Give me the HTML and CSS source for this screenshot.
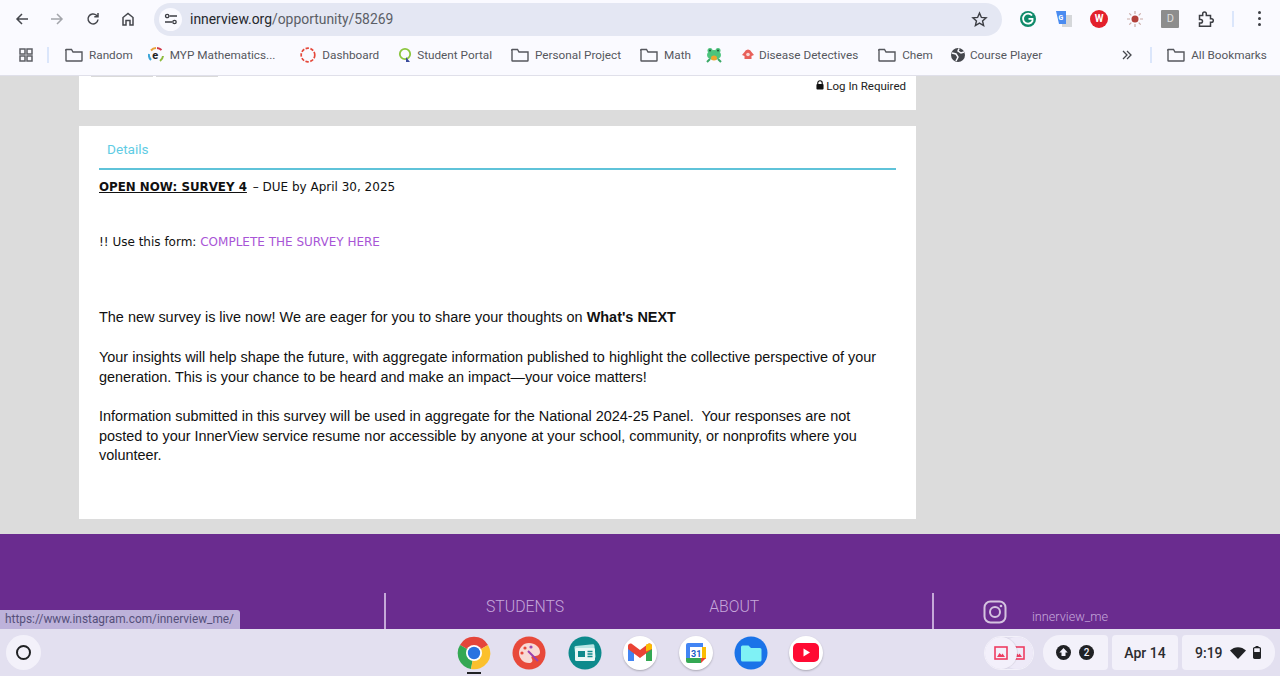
FILE: index.html
```html
<!DOCTYPE html>
<html lang="en">
<head>
    <meta charset="UTF-8">
    <title>innerview.org/opportunity/58269</title>
    <link rel="stylesheet" href="styles.css">
</head>
<body>
    <header class="browser">
        <div class="toolbar">
            <div class="nav-btns">
                <svg class="nav-icon" viewBox="0 0 16 16"><path d="M14 8H3M8 3L3 8l5 5" fill="none" stroke="#45474d" stroke-width="1.5"/></svg>
                <svg class="nav-icon" viewBox="0 0 16 16"><path d="M2 8h11M8 3l5 5-5 5" fill="none" stroke="#a3a5ab" stroke-width="1.5"/></svg>
                <svg class="nav-icon" viewBox="0 0 16 16"><path d="M13 8.500A5 5 0 1 1 11.500 4.300L13 5.600M13 2v3.800H9.300" fill="none" stroke="#45474d" stroke-width="1.5"/></svg>
                <svg class="nav-icon" viewBox="0 0 16 16"><path d="M3 14V6.500L8 2.500l5 4V14h-3V9.500H6V14z" fill="none" stroke="#45474d" stroke-width="1.5"/></svg>
            </div>
            <div class="omnibox">
                <span class="site-chip">
                    <svg width="14" height="14" viewBox="0 0 14 14"><path d="M5.500 4H13M1 10h7" stroke="#3c3e44" stroke-width="1.300"/><circle cx="3.200" cy="4" r="1.700" fill="none" stroke="#3c3e44" stroke-width="1.300"/><circle cx="10.500" cy="10" r="1.700" fill="none" stroke="#3c3e44" stroke-width="1.300"/></svg>
                </span>
                <span class="url">innerview.org<span class="url-path">/opportunity/58269</span></span>
                <svg class="star" width="17" height="17" viewBox="0 0 24 24"><path d="M12 3l2.700 6.100 6.600.6-5 4.400 1.500 6.500L12 17.200l-5.800 3.400 1.500-6.500-5-4.400 6.600-.6z" fill="none" stroke="#3c3e44" stroke-width="2"/></svg>
            </div>
            <div class="extensions">
                <svg class="ext-svg" width="18" height="18" viewBox="0 0 18 18"><circle cx="9" cy="9" r="8" fill="#0f8a6a"/><path d="M13 5.500A5 5 0 1 0 13.500 11V8.800H9.500" fill="none" stroke="#fff" stroke-width="1.800"/></svg>
                <svg class="ext-svg" width="18" height="18" viewBox="0 0 18 18"><rect x="7" y="5" width="10" height="12" fill="#d5d7da"/><path d="M1 1h10v13H4z" fill="#4a8bf0"/><text x="3.500" y="10" class="ext-letter">G</text></svg>
                <span class="ext ext-red">W</span>
                <svg class="ext-svg" width="18" height="18" viewBox="0 0 18 18"><circle cx="9" cy="9" r="3.500" fill="#b3403a"/><path d="M9 1v3M9 14v3M1 9h3M14 9h3M3.300 3.300l2 2M12.700 12.700l2 2M14.700 3.300l-2 2M5.300 12.700l-2 2" stroke="#c9a9a5" stroke-width="1.200"/></svg>
                <span class="ext ext-gray">D</span>
                <svg class="ext-svg" width="18" height="18" viewBox="0 0 18 18"><path d="M2.500 5.500h3.200V3.800a1.800 1.800 0 0 1 3.600 0v1.700h4.200v3.200h1a1.800 1.800 0 0 1 0 3.600h-1v4H2.500v-3.300h1.200a1.800 1.800 0 0 0 0-3.600H2.500z" fill="none" stroke="#3c3e44" stroke-width="1.500"/></svg>
                <span class="tb-divider"></span>
                <span class="kebab"><i></i><i></i><i></i></span>
            </div>
        </div>
        <div class="bookmarks">
            <svg class="apps" width="14" height="14" viewBox="0 0 14 14"><path d="M1 1h5v5H1zM8 1h5v5H8zM1 8h5v5H1zM8 8h5v5H8z" fill="none" stroke="#5d5f65" stroke-width="1.500"/></svg>
            <span class="bm-divider"></span>
            <a class="bm bm-random"><svg class="folder" viewBox="0 0 18 14"><path d="M1 2.500V12.500a.5.5 0 0 0 .5.5h15a.5.5 0 0 0 .5-.5V4H8L6.500 1.500H1.500A.5.5 0 0 0 1 2.500z" fill="none" stroke="#55575d" stroke-width="1.400"/></svg>Random</a>
            <a class="bm bm-myp"><svg class="fav" viewBox="0 0 16 16"><path d="M3 3.500A7 7 0 0 1 8 1" fill="none" stroke="#e8a33a" stroke-width="2"/><path d="M9 1a7 7 0 0 1 4.500 2" fill="none" stroke="#d13a4a" stroke-width="2"/><path d="M15 9a7 7 0 0 1-3 5" fill="none" stroke="#8dbb3c" stroke-width="2"/><path d="M3 13a7 7 0 0 1-2-6" fill="none" stroke="#3aa5d8" stroke-width="2"/><text x="4.300" y="11.500" class="fav-e">e</text></svg>MYP Mathematics...</a>
            <a class="bm bm-dash"><svg class="fav" viewBox="0 0 16 16"><circle cx="8" cy="8" r="6.800" fill="none" stroke="#e5483a" stroke-width="1.700" stroke-dasharray="3.400 1.500"/></svg>Dashboard</a>
            <a class="bm bm-portal"><svg class="fav" viewBox="0 0 16 16"><circle cx="8" cy="7" r="5.200" fill="none" stroke="#8cc63f" stroke-width="1.800"/><path d="M9 10l4 5H9z" fill="#3a4a9c"/></svg>Student Portal</a>
            <a class="bm bm-project"><svg class="folder" viewBox="0 0 18 14"><path d="M1 2.500V12.500a.5.5 0 0 0 .5.5h15a.5.5 0 0 0 .5-.5V4H8L6.500 1.500H1.500A.5.5 0 0 0 1 2.500z" fill="none" stroke="#55575d" stroke-width="1.400"/></svg>Personal Project</a>
            <a class="bm bm-math"><svg class="folder" viewBox="0 0 18 14"><path d="M1 2.500V12.500a.5.5 0 0 0 .5.5h15a.5.5 0 0 0 .5-.5V4H8L6.500 1.500H1.500A.5.5 0 0 0 1 2.500z" fill="none" stroke="#55575d" stroke-width="1.400"/></svg>Math</a>
            <svg class="fav bm-frog" viewBox="0 0 16 16"><ellipse cx="8" cy="8" rx="7" ry="5" fill="#4cc47c"/><circle cx="4" cy="3.500" r="2.500" fill="#4cc47c"/><circle cx="12" cy="3.500" r="2.500" fill="#4cc47c"/><circle cx="4" cy="3.500" r="1" fill="#24503a"/><circle cx="12" cy="3.500" r="1" fill="#24503a"/><ellipse cx="8" cy="11" rx="3" ry="2.500" fill="#eda52c"/><path d="M1 15l3-3M15 15l-3-3" stroke="#3aa866" stroke-width="2"/></svg>
            <a class="bm bm-disease"><svg class="fav" viewBox="0 0 16 16"><path d="M8 2.500a4 4 0 0 1 3.500 2.500L14 8l-2.500 1v3h-7V9L2 8l2.500-3A4 4 0 0 1 8 2.500z" fill="#e8605a"/><circle cx="8" cy="7.500" r="1.800" fill="#f8d8d6"/></svg>Disease Detectives</a>
            <a class="bm bm-chem"><svg class="folder" viewBox="0 0 18 14"><path d="M1 2.500V12.500a.5.5 0 0 0 .5.5h15a.5.5 0 0 0 .5-.5V4H8L6.500 1.500H1.500A.5.5 0 0 0 1 2.500z" fill="none" stroke="#55575d" stroke-width="1.400"/></svg>Chem</a>
            <a class="bm bm-course"><svg class="fav" viewBox="0 0 16 16"><circle cx="8" cy="8" r="7" fill="#45474d"/><path d="M2 6l4 1 2 3-2 4M9 1.500L8 4l3 2 3-1" fill="none" stroke="#fafaff" stroke-width="1.500"/></svg>Course Player</a>
            <svg class="bm-more" width="10" height="10" viewBox="0 0 10 10"><path d="M1 1l4 4-4 4M5 1l4 4-4 4" fill="none" stroke="#45474d" stroke-width="1.300"/></svg>
            <span class="bm-divider"></span>
            <a class="bm bm-all"><svg class="folder" viewBox="0 0 18 14"><path d="M1 2.500V12.500a.5.5 0 0 0 .5.5h15a.5.5 0 0 0 .5-.5V4H8L6.500 1.500H1.500A.5.5 0 0 0 1 2.500z" fill="none" stroke="#55575d" stroke-width="1.400"/></svg>All Bookmarks</a>
        </div>
    </header>

    <main class="page">
        <section class="card card-top">
            <div class="stub-btns"><span></span><span></span></div>
            <div class="login-note">
                <svg width="8" height="10" viewBox="0 0 9 11"><path d="M2 5V3.200a2.500 2.500 0 0 1 5 0V5" fill="none" stroke="#111" stroke-width="1.300"/><rect x="0.500" y="4.500" width="8" height="6" rx="1" fill="#111"/></svg>
                Log In Required
            </div>
        </section>

        <section class="card card-details">
            <div class="tabs"><span class="tab">Details</span></div>
            <p class="verdana first"><strong class="open-now">OPEN NOW: SURVEY 4</strong> &ndash; DUE by April 30, 2025</p>
            <p class="verdana form-line">!! Use this form: <a class="survey-link">COMPLETE THE SURVEY HERE</a></p>
            <p class="body-text intro">The new survey is live now! We are eager for you to share your thoughts on <b>What's NEXT</b></p>
            <p class="body-text">Your insights will help shape the future, with aggregate information published to highlight the collective perspective of your generation. This is your chance to be heard and make an impact&mdash;your voice matters!</p>
            <p class="body-text">Information submitted in this survey will be used in aggregate for the National 2024-25 Panel.&nbsp; Your responses are not posted to your InnerView service resume nor accessible by anyone at your school, community, or nonprofits where you volunteer.</p>
        </section>

        <footer class="site-footer">
            <div class="footer-links">
                <span class="footer-link link-students">STUDENTS</span>
                <span class="footer-link link-about">ABOUT</span>
            </div>
            <div class="footer-social">
                <svg width="24" height="24" viewBox="0 0 24 24"><rect x="1.500" y="1.500" width="21" height="21" rx="6" fill="none" stroke="#d5c3e0" stroke-width="2"/><circle cx="12" cy="12" r="5" fill="none" stroke="#d5c3e0" stroke-width="2"/><circle cx="18" cy="6" r="1.300" fill="#d5c3e0"/></svg>
                <span class="handle">innerview_me</span>
            </div>
        </footer>
    </main>

    <div class="status-bubble">https://www.instagram.com/innerview_me/</div>

    <nav class="shelf">
        <span class="launcher"><i></i></span>
        <div class="apps-row">
            <span class="app app-active">
                <svg width="34" height="34" viewBox="0 0 34 34"><path d="M17 17L3 9A16 16 0 0 1 31 9z" fill="#e5453a"/><path d="M17 17L3 9A16 16 0 0 0 14 33z" fill="#34a853"/><path d="M17 17L31 9A16 16 0 0 1 14 33z" fill="#fbc02d"/><circle cx="17" cy="17" r="8" fill="#fff"/><circle cx="17" cy="17" r="6.200" fill="#2a73e0"/></svg>
            </span>
            <span class="app">
                <svg width="34" height="34" viewBox="0 0 34 34"><circle cx="17" cy="17" r="16.500" fill="#e8493a"/><path d="M17 7c6 0 11 4 11 9 0 3-3 4-5 4h-2c-2 0-2 2-1 3 1 2 0 4-3 4-6 0-10-5-10-10S11 7 17 7z" fill="#f8d9d5"/><circle cx="13" cy="12" r="1.600" fill="#e8493a"/><circle cx="19" cy="11" r="1.600" fill="#a04ab0"/><circle cx="10" cy="17" r="1.600" fill="#e8493a"/><path d="M16 15l10 10" stroke="#9b3fae" stroke-width="2"/></svg>
            </span>
            <span class="app">
                <svg width="34" height="34" viewBox="0 0 34 34"><circle cx="17" cy="17" r="16.500" fill="#0d8a8c"/><rect x="7" y="9" width="20" height="14" rx="1.500" fill="#b9e6e4" transform="rotate(-6 17 16)"/><rect x="7" y="12" width="20" height="13" rx="1.500" fill="#e9f7f6"/><rect x="10" y="15" width="7" height="6" fill="#0d8a8c"/><path d="M19.500 15.500h5M19.500 18h5M19.500 20.500h5" stroke="#0d8a8c" stroke-width="1.300"/></svg>
            </span>
            <span class="app app-white">
                <svg width="26" height="20" viewBox="0 0 26 20"><path d="M1 18V4l6 4.500V18z" fill="#4285f4"/><path d="M25 18V4l-6 4.500V18z" fill="#34a853"/><path d="M1 6V3c0-2 2-3 4-2l8 6 8-6c2-1 4 0 4 2v3l-12 9z" fill="#ea4335"/><path d="M19 8.500V1.500L21 1c2-1 4 0 4 2v3z" fill="#fbbc04"/></svg>
            </span>
            <span class="app app-white">
                <svg width="22" height="22" viewBox="0 0 22 22"><rect x="1" y="1" width="20" height="20" rx="2" fill="#fff"/><path d="M4 1h14v4H4z" fill="#4285f4"/><path d="M1 3a2 2 0 0 1 2-2h2v15H1z" fill="#4285f4"/><path d="M17 5h4v12h-4z" fill="#fbbc04"/><path d="M1 16h15v5H3a2 2 0 0 1-2-2z" fill="#34a853"/><path d="M16 16h5l-5 5z" fill="#ea4335"/><text x="6" y="14.500" class="cal-num">31</text></svg>
            </span>
            <span class="app">
                <svg width="34" height="34" viewBox="0 0 34 34"><circle cx="17" cy="17" r="16.500" fill="#1a73e8"/><path d="M7 11a1.500 1.500 0 0 1 1.500-1.500h6L17 12h9a1.500 1.500 0 0 1 1.500 1.500V24a1.500 1.500 0 0 1-1.500 1.500H8.500A1.500 1.500 0 0 1 7 24z" fill="#7ff1f5"/></svg>
            </span>
            <span class="app app-white">
                <svg width="26" height="19" viewBox="0 0 26 19"><rect width="26" height="19" rx="5" fill="#ff0a33"/><path d="M10.500 5.500l6.500 4-6.500 4z" fill="#fff"/></svg>
            </span>
        </div>
        <div class="tray">
            <div class="tray-media">
                <span class="media-back"><svg width="14" height="14" viewBox="0 0 14 14"><rect x="1" y="1" width="12" height="12" fill="none" stroke="#ee3d62" stroke-width="1.600"/><path d="M3 11l2.500-4 2 2 1-1.500L11 11z" fill="#ee3d62"/></svg></span>
                <span class="media-front"><svg width="14" height="14" viewBox="0 0 14 14"><rect x="1" y="1" width="12" height="12" fill="none" stroke="#ee3d62" stroke-width="1.600"/><path d="M3 11l2.500-4 2 2 1-1.500L11 11z" fill="#ee3d62"/></svg></span>
            </div>
            <div class="pod pod-notify">
                <svg width="15" height="15" viewBox="0 0 15 15"><circle cx="7.500" cy="7.500" r="7.500" fill="#202124"/><path d="M7.500 3l4.200 4.500H9.500V11h-4V7.500H3.300z" fill="#f3f1fa"/></svg>
                <span class="badge-count">2</span>
            </div>
            <div class="pod pod-date">Apr 14</div>
            <div class="pod pod-time">
                <span>9:19</span>
                <svg width="16" height="12" viewBox="0 0 16 12"><path d="M0 3.500C4.500-1 11.500-1 16 3.500L8 12z" fill="#202124"/></svg>
                <svg width="8" height="13" viewBox="0 0 8 13"><rect x="2.500" y="0" width="3" height="2" fill="#202124"/><rect x="0.600" y="1.600" width="6.800" height="10.800" rx="1" fill="none" stroke="#202124" stroke-width="1.200"/><rect x="1" y="6" width="6" height="6" fill="#202124"/></svg>
            </div>
        </div>
    </nav>
</body>
</html>
```

FILE: styles.css
```css
* {
    box-sizing: border-box;
}
html, body {
    height: 100%;
}
body {
    margin: 0;
    height: 676px;
    overflow: hidden;
    display: flex;
    flex-direction: column;
    position: relative;
    font-family: Roboto, sans-serif;
    background-color: #dcdcdc;
}

/* browser chrome */
.browser {
    height: 76px;
    flex-shrink: 0;
    background-color: #fafaff;
    border-bottom: 1px solid #e0e0ea;
}
.toolbar {
    height: 37px;
    display: flex;
    align-items: center;
    padding: 0 0 0 14px;
}
.nav-btns {
    width: 140px;
    display: flex;
    gap: 19.3px;
}
.nav-icon {
    width: 16px;
    height: 16px;
}
.omnibox {
    width: 848px;
    height: 33px;
    margin-top: 1px;
    border-radius: 17px;
    background-color: #e4e7f3;
    display: flex;
    align-items: center;
    padding: 0 14px 0 5px;
}
.site-chip {
    width: 23px;
    height: 23px;
    border-radius: 50%;
    background-color: #fafaff;
    display: flex;
    align-items: center;
    justify-content: center;
}
.url {
    margin-left: 8px;
    font-size: 13.9px;
    color: #26282d;
    flex: 1;
}
.url-path {
    color: #5b5e66;
}
.extensions {
    display: flex;
    align-items: center;
    margin-left: 17px;
}
.ext {
    width: 18px;
    height: 18px;
    border-radius: 50%;
    display: flex;
    align-items: center;
    justify-content: center;
    font-size: 11px;
    font-weight: 700;
    color: #fff;
}
.ext-svg {
    flex-shrink: 0;
}
.extensions > * {
    margin-right: 17.6px;
}
.ext-red {
    background-color: #e3202c;
    font-size: 10px;
}
.ext-gray {
    border-radius: 1px;
    background-color: #8d8d8d;
    color: #dedede;
    font-weight: 400;
}
.extensions .tb-divider {
    width: 2px;
    height: 16px;
    background-color: #dbe6fb;
    margin-right: 24px;
    margin-left: -1px;
}
.kebab {
    display: flex;
    flex-direction: column;
    gap: 3px;
    width: 3px;
}
.kebab i {
    width: 3px;
    height: 3px;
    border-radius: 50%;
    background-color: #3c3e44;
}
.ext-letter {
    font: 700 7px Roboto, sans-serif;
    fill: #fff;
}

.bookmarks {
    height: 38px;
    display: flex;
    align-items: center;
    font-size: 11.75px;
    color: #55575d;
    padding-left: 19px;
    padding-bottom: 3px;
}
.bm {
    display: flex;
    align-items: center;
    white-space: nowrap;
}
.bm-divider {
    width: 2px;
    height: 16px;
    background-color: #dbe6fb;
    margin-left: 14px;
}
.folder {
    width: 18px;
    height: 14px;
    margin-right: 6px;
}
.fav {
    width: 16px;
    height: 16px;
    margin-right: 6px;
    flex-shrink: 0;
}
.fav-e {
    font: 700 11px Roboto, sans-serif;
    fill: #222;
}
.bm-random {
    margin-left: 16px;
}
.bm-myp {
    margin-left: 15px;
}
.bm-dash {
    margin-left: 25px;
}
.bm-portal {
    margin-left: 18px;
}
.bm-portal .fav, .bm-course .fav {
    margin-right: 4px;
}
.bm-project {
    margin-left: 19px;
}
.bm-math {
    margin-left: 19px;
}
.bm-frog {
    margin-left: 15px;
    margin-right: 0;
}
.bm-disease {
    margin-left: 18px;
}
.bm-disease .fav {
    margin-right: 3px;
}
.bm-chem {
    margin-left: 20px;
}
.bm-course {
    margin-left: 17px;
}
.bm-more {
    margin-left: 80px;
    margin-right: 4px;
}
.bm-all {
    margin-left: 15px;
}

/* page */
.page {
    flex: 1;
    overflow: hidden;
    background-color: #dcdcdc;
    display: flex;
    flex-direction: column;
}
.card {
    width: 837px;
    margin-left: 79px;
    background-color: #fff;
    flex-shrink: 0;
}
.card-top {
    height: 34px;
    display: flex;
    justify-content: space-between;
    padding: 0 10px 0 12px;
}
.stub-btns {
    display: flex;
    gap: 3px;
}
.stub-btns span {
    width: 62px;
    height: 1px;
    background-color: #dadada;
}
.login-note {
    font-size: 11.5px;
    color: #222;
    padding-top: 3px;
}
.card-details {
    height: 393px;
    margin-top: 16px;
    padding: 0 20px;
    color: #111;
}
.tabs {
    height: 44px;
    border-bottom: 2px solid #5fc3d9;
    padding: 13px 0 0 8px;
}
.tab {
    font-size: 13.6px;
    color: #5fcce4;
}
.verdana {
    font-family: "DejaVu Sans", sans-serif;
    font-size: 12px;
    margin: 0;
    line-height: 14px;
}
.first {
    margin-top: 10px;
}
.open-now {
    text-decoration: underline;
    font-size: 11.85px;
    margin-right: 2px;
}
.form-line {
    margin-top: 41px;
}
.survey-link {
    color: #a855d6;
}
.body-text {
    font-family: "Liberation Sans", Arial, sans-serif;
    font-size: 14.45px;
    line-height: 19.6px;
    margin: 20px 0 0;
    padding-right: 12px;
}
.intro {
    margin-top: 59.3px;
    margin-bottom: 20.2px;
}

/* footer */
.site-footer {
    margin-top: 15px;
    flex: 1;
    background-color: #6a2c8f;
    padding-top: 59px;
    display: flex;
    color: #c6a8db;
}
.footer-links {
    margin-left: 384px;
    width: 550px;
    height: 60px;
    border-left: 2px solid #c5a9d8;
    border-right: 2px solid #c5a9d8;
    display: flex;
    font-size: 15.8px;
    font-weight: 300;
    padding-left: 100px;
}
.footer-link {
    padding-top: 4px;
}
.link-about {
    margin-left: 145px;
}
.footer-social {
    margin-left: 49px;
    margin-top: 7px;
    display: flex;
    align-items: flex-start;
}
.handle {
    margin-left: 25px;
    margin-top: 9px;
    font-size: 12.7px;
    font-weight: 300;
}

/* status bubble + shelf */
.status-bubble {
    position: absolute;
    left: 0;
    top: 610px;
    width: 240px;
    height: 19px;
    padding: 2px 0 0 5px;
    border-top-right-radius: 3px;
    background-color: #bdb2da;
    color: #55507a;
    font-size: 11.85px;
    white-space: nowrap;
}
.shelf {
    height: 47px;
    flex-shrink: 0;
    background-color: #e3e0f0;
    display: flex;
    align-items: center;
    position: relative;
    padding-left: 6px;
}
.launcher {
    width: 35px;
    height: 35px;
    border-radius: 50%;
    background-color: #f3f1fa;
    display: flex;
    align-items: center;
    justify-content: center;
}
.launcher i {
    width: 15px;
    height: 15px;
    border-radius: 50%;
    border: 2px solid #202124;
}
.apps-row {
    margin-left: 416px;
    display: flex;
    gap: 21.4px;
}
.app {
    width: 34px;
    height: 34px;
    border-radius: 50%;
    display: flex;
    align-items: center;
    justify-content: center;
    position: relative;
}
.app-white {
    background-color: #fff;
    box-shadow: 0 1px 2px rgba(0, 0, 0, 0.25);
}
.app-active::after {
    content: "";
    position: absolute;
    left: 10px;
    bottom: -4px;
    width: 14px;
    height: 2px;
    background-color: #202124;
}
.cal-num {
    font: 700 9px Roboto, sans-serif;
    fill: #1a5fc8;
}
.tray {
    position: absolute;
    right: 5px;
    top: 6px;
    display: flex;
    gap: 4px;
    align-items: center;
}
.tray-media {
    position: relative;
    width: 50px;
    height: 34px;
    margin-right: 5px;
    border-radius: 17px;
    border: 1px solid #f3f1fa;
}
.media-back, .media-front {
    position: absolute;
    top: 0;
    width: 32px;
    height: 32px;
    border-radius: 50%;
    background-color: #eeeaf8;
    display: flex;
    align-items: center;
    justify-content: center;
}
.media-back {
    left: 16px;
    justify-content: flex-end;
    padding-right: 8px;
}
.media-front {
    left: 0;
    background-color: #f3f0fb;
    box-shadow: 1px 0 1px rgba(0, 0, 0, 0.08);
}
.pod {
    height: 35px;
    background-color: #f3f1fa;
    display: flex;
    align-items: center;
    font-size: 14px;
    font-weight: 500;
    color: #2b2c30;
    border-radius: 4px;
}
.pod-notify {
    width: 65px;
    padding-left: 13px;
    gap: 8px;
    border-radius: 17px 4px 4px 17px;
}
.badge-count {
    width: 15px;
    height: 15px;
    border-radius: 50%;
    background-color: #202124;
    color: #f3f1fa;
    font-size: 10px;
    display: flex;
    align-items: center;
    justify-content: center;
}
.pod-date {
    width: 66px;
    justify-content: center;
}
.pod-time {
    width: 93px;
    padding-left: 13px;
    gap: 7px;
    border-radius: 4px 17px 17px 4px;
}
```
